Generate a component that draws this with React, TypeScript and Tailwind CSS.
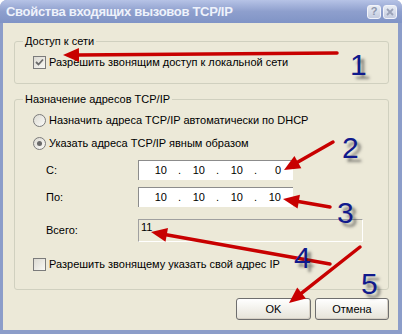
import React from "react";

function Arrow({ x1, y1, x2, y2 }: { x1: number; y1: number; x2: number; y2: number }) {
  const dx = x2 - x1;
  const dy = y2 - y1;
  const len = Math.hypot(dx, dy);
  const ux = dx / len;
  const uy = dy / len;
  const hl = 16;
  const hw = 7;
  const bx = x2 - ux * hl;
  const by = y2 - uy * hl;
  const px = -uy;
  const py = ux;
  const pts = `${x2},${y2} ${bx + px * hw},${by + py * hw} ${bx - px * hw},${by - py * hw}`;
  return (
    <g>
      <line x1={x1} y1={y1} x2={bx + ux * 2} y2={by + uy * 2} stroke="#c80000" strokeWidth={3.5} strokeLinecap="round" />
      <polygon points={pts} fill="#c80000" />
    </g>
  );
}

function Checkbox({ checked }: { checked?: boolean }) {
  return (
    <div className="w-[13px] h-[13px] border border-[#7b7b7b] bg-gradient-to-br from-[#dcdad2] to-[#f8f8f4] flex items-center justify-center shrink-0">
      {checked && (
        <svg width="9" height="9" viewBox="0 0 9 9">
          <path d="M1 4 L3.5 6.5 L8 1.5" stroke="#6b6b6b" strokeWidth="1.8" fill="none" />
        </svg>
      )}
    </div>
  );
}

function Radio({ checked }: { checked?: boolean }) {
  return (
    <div className="w-[13px] h-[13px] rounded-full border border-[#7b7b7b] bg-gradient-to-br from-[#dcdad2] to-[#fbfbf8] flex items-center justify-center shrink-0">
      {checked && <div className="w-[5px] h-[5px] rounded-full bg-[#6a6a6a]" />}
    </div>
  );
}

function IpBox({ parts }: { parts: string[] }) {
  return (
    <div className="w-[155px] h-[20px] bg-white border-t border-l border-[#8c8c8c] flex items-center pl-[2px]">
      {parts.map((p, i) => (
        <React.Fragment key={i}>
          <span className="w-[26px] text-right shrink-0">{p}</span>
          {i < 3 && <span className="w-[12px] pl-[11px] shrink-0">.</span>}
        </React.Fragment>
      ))}
    </div>
  );
}

const numCls =
  "absolute text-[30px] leading-[30px] text-[#101a8c] [text-shadow:4px_4px_3px_rgba(50,50,50,0.55)] font-['Liberation_Sans',sans-serif]";

export default function App() {
  return (
    <div className="w-[402px] h-[334px] bg-white relative font-['Liberation_Sans',Arial,sans-serif] text-[11px] text-black">
      <div className="h-full flex flex-col rounded-t-[7px] overflow-hidden bg-[#8c9dc9]">
        {/* Title bar */}
        <div className="h-[23px] shrink-0 flex items-center justify-between bg-gradient-to-b from-[#b6c3e6] via-[#8e9fcd] to-[#8094c6] pl-[6px] pr-[5px]">
          <span className="font-bold text-[13px] tracking-[-0.3px] text-[#eef2fb] whitespace-nowrap">
            Свойства входящих вызовов TCP/IP
          </span>
          <div className="flex gap-[2px]">
            <div className="w-[14px] h-[14px] rounded-[3px] border border-[#f2f4fa] bg-gradient-to-b from-[#e8ecf4] to-[#c4cce0] flex items-center justify-center text-[11px] font-bold text-[#8c95ad] leading-none">
              ?
            </div>
            <div className="w-[14px] h-[14px] rounded-[3px] border border-[#f2f4fa] bg-gradient-to-b from-[#e8ecf4] to-[#c4cce0] flex items-center justify-center">
              <svg width="8" height="8" viewBox="0 0 8 8">
                <path d="M1 1 L7 7 M7 1 L1 7" stroke="#9aa2b8" strokeWidth="1.8" />
              </svg>
            </div>
          </div>
        </div>

        {/* Client */}
        <div className="flex-1 ml-[3px] mr-[4px] mb-[4px] bg-[#ece9d8] flex flex-col pl-[11px] pr-[9px]">
          {/* Group 1 */}
          <div className="mt-[18px] h-[43px] border border-[#d0d0bf] rounded-[3px] relative pl-[18px] pt-[14px]">
            <span className="absolute -top-[7px] left-[8px] bg-[#ece9d8] px-[2px] leading-[13px]">Доступ к сети</span>
            <div className="flex items-center gap-[3px] h-[13px]">
              <Checkbox checked />
              <span>Разрешить звонящим доступ к локальной сети</span>
            </div>
          </div>

          {/* Group 2 */}
          <div className="mt-[15px] h-[191px] border border-[#d0d0bf] rounded-[3px] relative pl-[18px] pt-[14px] flex flex-col">
            <span className="absolute -top-[7px] left-[8px] bg-[#ece9d8] px-[2px] leading-[13px]">
              Назначение адресов TCP/IP
            </span>
            <div className="flex items-center gap-[3px] h-[13px]">
              <Radio />
              <span>Назначить адреса TCP/IP автоматически по DHCP</span>
            </div>
            <div className="flex items-center gap-[3px] h-[13px] mt-[10px]">
              <Radio checked />
              <span>Указать адреса TCP/IP явным образом</span>
            </div>
            <div className="flex items-center mt-[10px] ml-[13px]">
              <span className="w-[92px]">С:</span>
              <IpBox parts={["10", "10", "10", "0"]} />
            </div>
            <div className="flex items-center mt-[7px] ml-[13px]">
              <span className="w-[92px]">По:</span>
              <IpBox parts={["10", "10", "10", "10"]} />
            </div>
            <div className="flex items-center mt-[12px] ml-[13px]">
              <span className="w-[92px]">Всего:</span>
              <div className="w-[225px] h-[23px] border-t border-l border-[#a0a0a0] border-b border-r border-b-white border-r-white pl-[2px] pt-[1px] leading-[13px]">
                11
              </div>
            </div>
            <div className="flex items-center gap-[3px] h-[13px] mt-[16px]">
              <Checkbox />
              <span>Разрешить звонящему указать свой адрес IP</span>
            </div>
          </div>

          {/* Buttons */}
          <div className="mt-[8px] flex justify-end gap-[4px]">
            <button className="w-[75px] h-[22px] rounded-[3px] border border-[#6e6e6e] bg-gradient-to-b from-white to-[#e6e3d8] shadow-[inset_-1px_-1px_0_#d6d0c5]">
              OK
            </button>
            <button className="w-[74px] h-[22px] rounded-[3px] border border-[#6e6e6e] bg-gradient-to-b from-white to-[#e6e3d8] shadow-[inset_-1px_-1px_0_#d6d0c5]">
              Отмена
            </button>
          </div>
        </div>
      </div>

      {/* Annotation overlay */}
      <svg className="absolute inset-0 pointer-events-none" width="402" height="334">
        <Arrow x1={337} y1={53} x2={63} y2={55} />
        <Arrow x1={333} y1={142} x2={284} y2={170} />
        <Arrow x1={330} y1={207} x2={283} y2={199} />
        <Arrow x1={330} y1={264} x2={151} y2={232} />
        <Arrow x1={360} y1={247} x2={289} y2={303} />
      </svg>
      <span className={numCls} style={{ left: 350, top: 50 }}>1</span>
      <span className={numCls} style={{ left: 342, top: 133 }}>2</span>
      <span className={numCls} style={{ left: 337, top: 198 }}>3</span>
      <span className={numCls} style={{ left: 294, top: 243 }}>4</span>
      <span className={numCls} style={{ left: 361, top: 269 }}>5</span>
    </div>
  );
}
